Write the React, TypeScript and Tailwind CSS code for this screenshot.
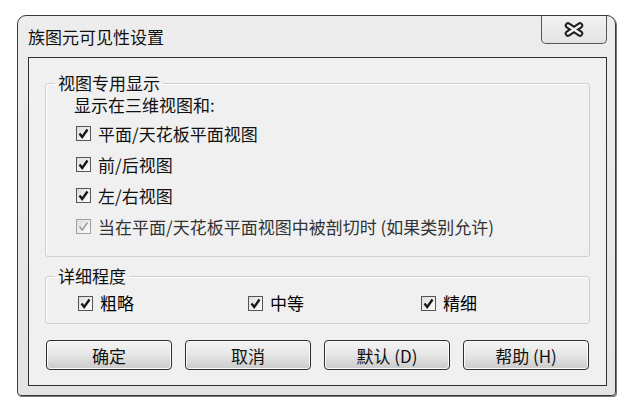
import React from 'react';

const FONT = { fontFamily: '"Noto Sans CJK SC", "Noto Sans", sans-serif' };

const CheckBox = ({ disabled = false }: { disabled?: boolean }) => (
  <span
    className={`flex h-[15px] w-[15px] shrink-0 items-center justify-center border bg-gradient-to-br from-[#dcdcdc] to-white ${
      disabled ? 'border-[#a0a0a0]' : 'border-[#555]'
    }`}
  >
    <svg width="13" height="13" viewBox="0 0 13 13">
      <path
        d="M2.5 6.5 L5.2 10 L10.5 2.5"
        fill="none"
        stroke={disabled ? '#999' : '#161616'}
        strokeWidth={disabled ? 1.4 : 2.3}
      />
    </svg>
  </span>
);

const CheckRow = ({ label, disabled = false }: { label: string; disabled?: boolean }) => (
  <div className="flex h-[31px] items-center gap-[7px] pl-[30px]">
    <CheckBox disabled={disabled} />
    <span className={disabled ? 'text-[#333]' : 'text-[#111]'}>{label}</span>
  </div>
);

const Button = ({ label }: { label: string }) => (
  <button className="h-[30px] w-[126px] rounded-[4px] border border-[#2e2e2e] bg-gradient-to-b from-[#f4f4f4] via-[#e6e6e6] to-[#cbcbcb] text-[17px] leading-none text-[#111] shadow-[inset_0_0_0_1px_#fafafa]">
    {label}
  </button>
);

export default function App() {
  return (
    <div className="min-h-screen bg-white pl-[17px] pt-[15px] text-[17px] leading-[20px]" style={FONT}>
      <div className="flex h-[381px] w-[599px] flex-col rounded-t-[9px] rounded-b-[4px] border border-[#3a3a3a] bg-gradient-to-b from-[#ededed] to-[#e4e4e4] pb-[9px] pl-[10px] pr-[8px] shadow-[1px_1px_0_#777]">
        <div className="flex h-[41px] items-start justify-between">
          <span className="mt-[11px] text-[#111]">族图元可见性设置</span>
          <div className="flex h-[28px] w-[66px] items-center justify-center rounded-b-[5px] border border-t-0 border-[#555] bg-gradient-to-b from-[#f2f2f2] to-[#e3e3e3]">
            <svg width="22" height="15" viewBox="0 0 22 15">
              <path d="M5 3.5 L17 11.5 M17 3.5 L5 11.5" stroke="#1e1e1e" strokeWidth="6.5" strokeLinecap="round" />
              <path d="M5 3.5 L17 11.5 M17 3.5 L5 11.5" stroke="#f8f8f8" strokeWidth="2.6" strokeLinecap="round" />
            </svg>
          </div>
        </div>

        <div className="flex flex-1 flex-col border border-[#2f2f2f] bg-[#f0f0f0] px-[16px] pt-[16px]">
          <fieldset className="rounded-[3px] border border-[#cfcfcf] pb-[14px] shadow-[inset_1px_1px_0_#fff]">
            <legend className="ml-[9px] px-[3px] leading-[18px] text-[#111]">视图专用显示</legend>
            <div className="mt-[3px] pl-[28px] text-[#111]">显示在三维视图和:</div>
            <div className="mt-[3px] flex flex-col">
              <CheckRow label="平面/天花板平面视图" />
              <CheckRow label="前/后视图" />
              <CheckRow label="左/右视图" />
              <CheckRow label="当在平面/天花板平面视图中被剖切时 (如果类别允许)" disabled />
            </div>
          </fieldset>

          <fieldset className="mt-[10px] rounded-[3px] border border-[#cfcfcf] pb-[5px] shadow-[inset_1px_1px_0_#fff]">
            <legend className="ml-[9px] px-[3px] leading-[18px] text-[#111]">详细程度</legend>
            <div className="mt-[3px] grid h-[30px] grid-cols-[170px_173px_1fr] items-center pl-[32px]">
              <div className="flex items-center gap-[7px]">
                <CheckBox />
                <span>粗略</span>
              </div>
              <div className="flex items-center gap-[7px]">
                <CheckBox />
                <span>中等</span>
              </div>
              <div className="flex items-center gap-[7px]">
                <CheckBox />
                <span>精细</span>
              </div>
            </div>
          </fieldset>

          <div className="ml-[1px] mt-[16px] flex gap-[13px]">
            <Button label="确定" />
            <Button label="取消" />
            <Button label="默认 (D)" />
            <Button label="帮助 (H)" />
          </div>
        </div>
      </div>
    </div>
  );
}
